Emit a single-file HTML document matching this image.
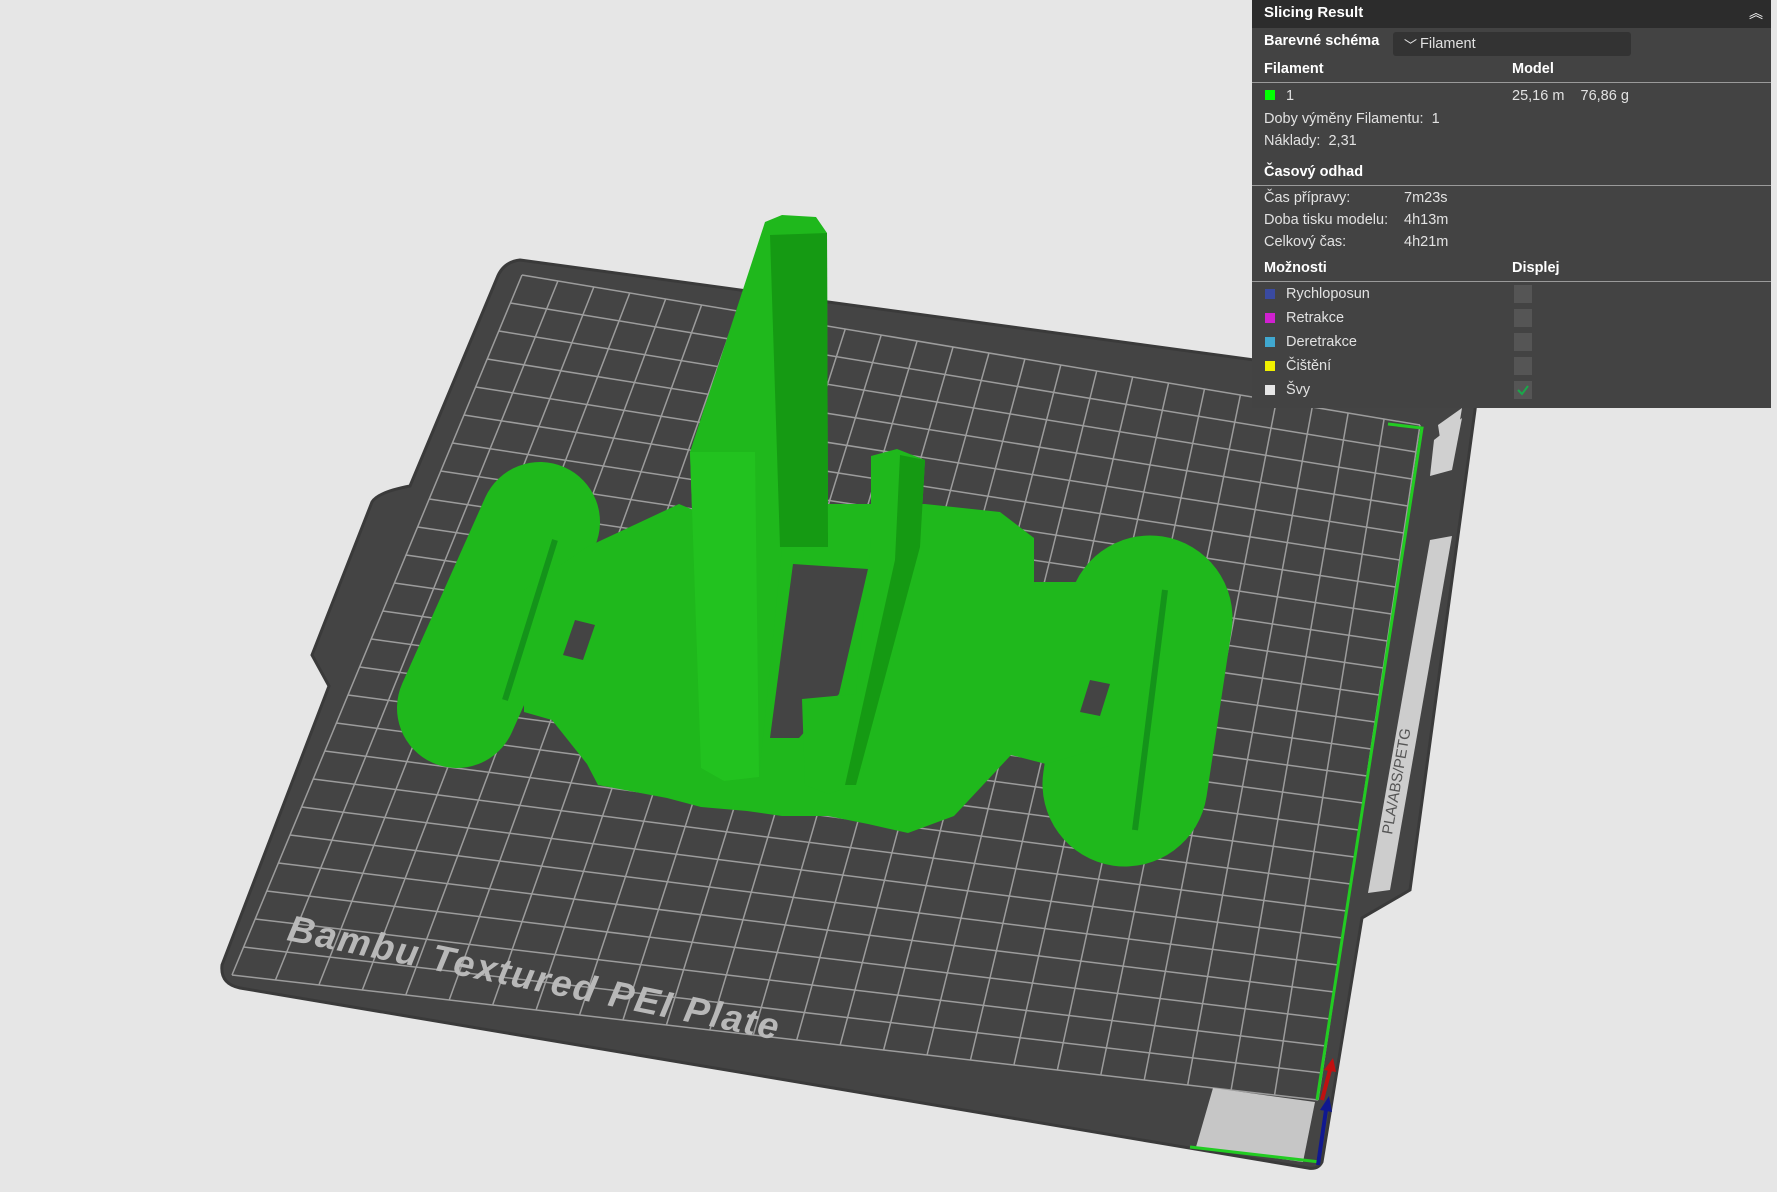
<!DOCTYPE html>
<html><head><meta charset="utf-8">
<style>
html,body{margin:0;padding:0;width:1777px;height:1192px;overflow:hidden;background:#e6e6e6;font-family:"Liberation Sans",sans-serif;}
#scene{position:absolute;left:0;top:0}
#panel{position:absolute;left:1252px;top:0;width:519px;height:408px;background:#434343;color:#e2e2e2;font-size:14.5px;}
#panel .hdr{height:28px;background:#2c2c2c;color:#fff;font-weight:bold;font-size:15px;line-height:26px;padding-left:12px;position:relative}
.t{position:absolute;white-space:nowrap}
.b{font-weight:bold;color:#fff}
.line{position:absolute;left:0;width:519px;height:1px;background:#9a9a9a}
.sq{position:absolute;width:10px;height:10px}
.cb{position:absolute;left:1514px;width:18px;height:18px;background:#555}
</style></head><body>
<svg id="scene" width="1777" height="1192" viewBox="0 0 1777 1192">
<path d="M520,260 L1460,388 Q1478,392 1475,410 L1410,890 L1362,918 L1322,1162 Q1318,1170 1308,1168 L240,988 Q220,984 222,965 L329,686 L312,655 L372,502 Q378,492 410,486 L497,278 Q503,262 520,260 Z" fill="#444444" stroke="#3a3a3a" stroke-width="3"/>
<g id="grid" stroke="#9c9c9c" stroke-width="1.5"></g>
<polygon points="1430,540 1452,536 1390,890 1368,893" fill="#cdcdcd"/>
<polygon points="1434,440 1462,418 1452,470 1430,476" fill="#d0d0d0"/>
<polygon points="1438,425 1462,408 1460,420 1440,438" fill="#d0d0d0"/>
<text x="0" y="0" transform="translate(1392,835) rotate(-80)" font-size="15" fill="#555" font-family="Liberation Sans">PLA/ABS/PETG</text>
<text x="0" y="0" transform="translate(1425,380) rotate(-80)" font-size="30" font-weight="bold" fill="#1e4d1e">01</text>
<polygon points="1213,1088 1315,1102 1303,1162 1196,1147" fill="#c6c6c6"/>
<text x="0" y="0" transform="translate(286,940) rotate(11.5)" font-size="37" font-weight="bold" font-style="italic" fill="#b8b8b8" textLength="500">Bambu Textured PEI Plate</text>
<g>
<line x1="540" y1="522" x2="457" y2="708" stroke="#1fb81c" stroke-width="120" stroke-linecap="round"/>
<line x1="1150" y1="618" x2="1125" y2="784" stroke="#1fb81c" stroke-width="165" stroke-linecap="round"/>
<polygon points="587,547 679,504 782,547 828,504 874,504 925,504 1000,512 1034,538 1034,582 1109,582 1109,746 1046,764 1011,755 954,816 908,833 868,824 828,816 782,816 747,811 701,807 667,798 598,785 587,764 552,720 524,712 524,590" fill="#1fb81c"/>
<polygon points="793,564 868,569 839,694 799,738 770,738" fill="#444"/>
<polygon points="575,620 595,625 583,660 563,655" fill="#444"/>
<polygon points="1090,680 1110,684 1100,716 1080,712" fill="#444"/>
<line x1="555" y1="540" x2="505" y2="700" stroke="#14931a" stroke-width="6"/>
<line x1="1165" y1="590" x2="1135" y2="830" stroke="#14931a" stroke-width="6"/>
<polygon points="690,452 765,222 782,215 816,217 827,233 828,547 805,551 782,547 759,777 724,781 701,768" fill="#1fb81c"/>
<polygon points="770,235 827,233 828,547 780,547" fill="#159a13"/>
<polygon points="690,452 755,452 759,777 724,781 701,768" fill="#22c21f"/>
<polygon points="871,456 897,449 925,460 920,547 856,785 828,794 805,785 802,699 856,694 871,538" fill="#1fb81c"/>
<polygon points="900,455 925,460 920,547 856,785 845,785 895,560" fill="#159a13"/>
</g>
<polyline points="1388,424 1422,428 1317,1100" fill="none" stroke="#22cc22" stroke-width="3"/>
<line x1="1190" y1="1147" x2="1320" y2="1162" stroke="#22cc22" stroke-width="3"/>
<line x1="1322" y1="1100" x2="1330" y2="1070" stroke="#c01010" stroke-width="4"/>
<polygon points="1324,1070 1336,1072 1333,1058" fill="#c01010"/>
<line x1="1318" y1="1165" x2="1326" y2="1110" stroke="#101890" stroke-width="4"/>
<polygon points="1320,1110 1332,1112 1329,1096" fill="#101890"/>
</svg>

<div id="panel">
<div class="hdr">Slicing Result<span style="position:absolute;right:8px;top:0;font-weight:normal;font-size:14px">︽</span></div>
<div class="t b" style="left:12px;top:33px">Barevné schéma</div>
<div style="position:absolute;left:141px;top:32px;width:238px;height:24px;background:#333;border-radius:3px"></div>
<div class="t" style="left:152px;top:35px;font-size:13px">﹀</div>
<div class="t" style="left:168px;top:36px">Filament</div>
<div class="t b" style="left:12px;top:61px">Filament</div>
<div class="t b" style="left:260px;top:61px">Model</div>
<div class="line" style="top:82px"></div>
<div class="sq" style="left:13px;top:90px;background:#0f0"></div>
<div class="t" style="left:34px;top:88px">1</div>
<div class="t" style="left:260px;top:88px">25,16 m&nbsp;&nbsp;&nbsp; 76,86 g</div>
<div class="t" style="left:12px;top:111px">Doby výměny Filamentu:&nbsp; 1</div>
<div class="t" style="left:12px;top:133px">Náklady:&nbsp; 2,31</div>
<div class="t b" style="left:12px;top:164px">Časový odhad</div>
<div class="line" style="top:185px"></div>
<div class="t" style="left:12px;top:190px">Čas přípravy:</div><div class="t" style="left:152px;top:190px">7m23s</div>
<div class="t" style="left:12px;top:212px">Doba tisku modelu:</div><div class="t" style="left:152px;top:212px">4h13m</div>
<div class="t" style="left:12px;top:234px">Celkový čas:</div><div class="t" style="left:152px;top:234px">4h21m</div>
<div class="t b" style="left:12px;top:260px">Možnosti</div>
<div class="t b" style="left:260px;top:260px">Displej</div>
<div class="line" style="top:281px"></div>
<div class="sq" style="left:13px;top:289px;background:#3a4aa0"></div><div class="t" style="left:34px;top:286px">Rychloposun</div>
<div class="sq" style="left:13px;top:313px;background:#d020d0"></div><div class="t" style="left:34px;top:310px">Retrakce</div>
<div class="sq" style="left:13px;top:337px;background:#40a8d0"></div><div class="t" style="left:34px;top:334px">Deretrakce</div>
<div class="sq" style="left:13px;top:361px;background:#f0f000"></div><div class="t" style="left:34px;top:358px">Čištění</div>
<div class="sq" style="left:13px;top:385px;background:#e6e6e6"></div><div class="t" style="left:34px;top:382px">Švy</div>
</div>
<div class="cb" style="top:285px"></div>
<div class="cb" style="top:309px"></div>
<div class="cb" style="top:333px"></div>
<div class="cb" style="top:357px"></div>
<div class="cb" style="top:381px"><svg width="18" height="18"><path d="M4,9 L8,13 L14,5" fill="none" stroke="#1aa84a" stroke-width="2"/></svg></div>

<script>
(function(){
var g=document.getElementById('grid');
var TL=[522,275],TR=[1420,425],BR=[1318,1100],BL=[232,975];
function P(u,v){var x=(1-u)*(1-v)*TL[0]+u*(1-v)*TR[0]+u*v*BR[0]+(1-u)*v*BL[0];
var y=(1-u)*(1-v)*TL[1]+u*(1-v)*TR[1]+u*v*BR[1]+(1-u)*v*BL[1];return [x,y];}
var N=25,s='';
for(var i=0;i<=N;i++){var t=i/N;
var a=P(t,0),b=P(t,1);s+='<line x1="'+a[0]+'" y1="'+a[1]+'" x2="'+b[0]+'" y2="'+b[1]+'"/>';
a=P(0,t);b=P(1,t);s+='<line x1="'+a[0]+'" y1="'+a[1]+'" x2="'+b[0]+'" y2="'+b[1]+'"/>';}
g.innerHTML=s;
})();
</script>
</body></html>
